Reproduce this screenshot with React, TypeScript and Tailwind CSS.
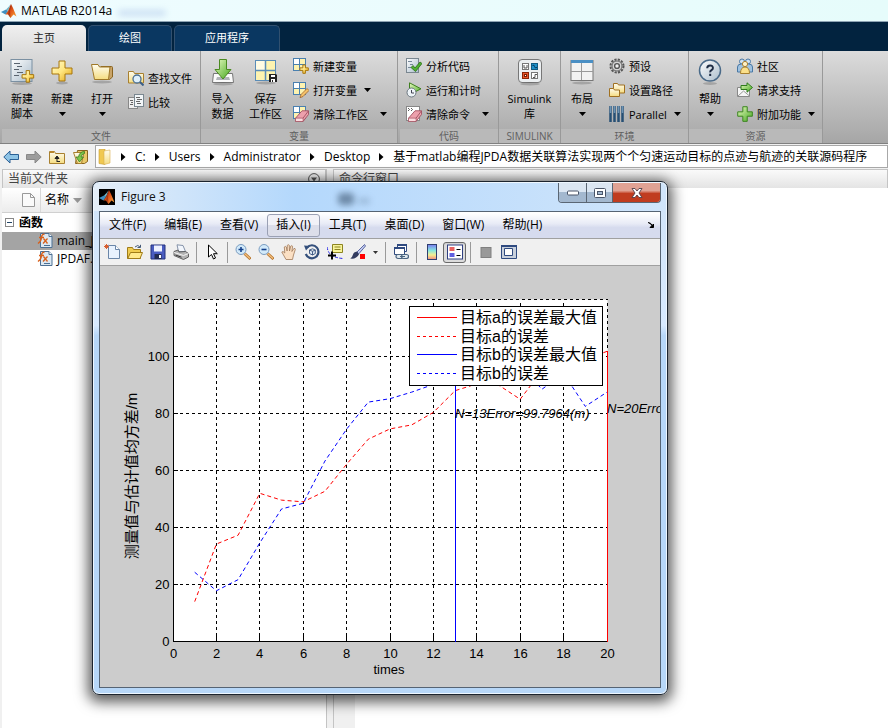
import React from "react";

const UI = "font-['Open_Sans','Noto_Sans_CJK_SC',sans-serif]";

type Kids = { children?: React.ReactNode };

/* ---------- icons ---------- */

function Ico({ children, w = 16, h = 16, box }: Kids & { w?: number; h?: number; box?: string }) {
  return (
    <svg width={w} height={h} viewBox={box ?? `0 0 ${w} ${h}`} className="shrink-0" aria-hidden="true">
      {children}
    </svg>
  );
}

function Defs() {
  return (
    <svg width="0" height="0" className="absolute" aria-hidden="true">
      <defs>
        <linearGradient id="gold" x1="0" y1="0" x2="1" y2="1">
          <stop offset="0" stopColor="#fffbd0" />
          <stop offset=".5" stopColor="#ffe680" />
          <stop offset="1" stopColor="#e0a010" />
        </linearGradient>
        <linearGradient id="folder" x1="0" y1="0" x2="0" y2="1">
          <stop offset="0" stopColor="#fffdf0" />
          <stop offset="1" stopColor="#f5dc80" />
        </linearGradient>
        <linearGradient id="green" x1="0" y1="0" x2="1" y2="1">
          <stop offset="0" stopColor="#e8fbc0" />
          <stop offset="1" stopColor="#45a820" />
        </linearGradient>
        <linearGradient id="steel" x1="0" y1="0" x2="1" y2="1">
          <stop offset="0" stopColor="#ffffff" />
          <stop offset="1" stopColor="#a9bccb" />
        </linearGradient>
        <linearGradient id="rainbow" x1="0" y1="0" x2="0" y2="1">
          <stop offset="0" stopColor="#7a7af0" />
          <stop offset=".4" stopColor="#86e8e0" />
          <stop offset=".7" stopColor="#f6ee90" />
          <stop offset="1" stopColor="#f08a80" />
        </linearGradient>
        <linearGradient id="flame" x1="0" y1="0" x2="1" y2="1">
          <stop offset="0" stopColor="#7c1a08" />
          <stop offset=".5" stopColor="#e0561a" />
          <stop offset="1" stopColor="#f8b040" />
        </linearGradient>
      </defs>
    </svg>
  );
}

const Logo = ({ dark }: { dark?: boolean }) => (
  <Ico>
    {dark && <rect width="16" height="16" fill="#000" />}
    <path d="M0 9 L5 6.500 L7 8 L4.500 11.500 Z" fill="#3f8fc0" />
    <path d="M5 6.500 L7.500 4 L9.500 1.500 L7 8 Z" fill="#6db3c8" />
    <path d="M4.500 11.500 L7 8 L10 1 L12 5 L15.500 13.500 L12.500 11.500 L9.500 15 L7 11.500 Z" fill="url(#flame)" />
    <path d="M10 1 L9 8 L9.500 15 L7 11 Z" fill="#8c2410" opacity=".6" />
  </Ico>
);

const Caret = () => (
  <svg width="7" height="4" viewBox="0 0 7 4" className="shrink-0" aria-hidden="true">
    <path d="M0 0H7L3.500 4Z" fill="#000" />
  </svg>
);

const Plus = ({ x = 0, y = 0, s = 1, fill = "url(#gold)", stroke = "#a8760c" }) => (
  <path
    transform={`translate(${x} ${y}) scale(${s})`}
    d="M8 1H14V8H21V14H14V21H8V14H1V8H8Z"
    fill={fill}
    stroke={stroke}
    strokeWidth={1 / s}
  />
);

const Shadow = ({ y, cx = 13, rx = 10 }: { y: number; cx?: number; rx?: number }) => (
  <ellipse cx={cx} cy={y} rx={rx} ry="1.500" fill="#000" opacity=".18" />
);

const NewScript = () => (
  <Ico w={26} h={28}>
    <rect x="2" y="1.500" width="21" height="22" fill="url(#steel)" stroke="#7b90a2" />
    <path d="M5 5.500h6M8 8.500h5M5 11.500h5M8 14.500h6M5 17.500h5" stroke="#5b6570" />
    <Plus x={12.500} y={12} s={0.58} />
    <Shadow y={25.500} />
  </Ico>
);
const NewPlus = () => (
  <Ico w={26} h={28}>
    <Plus x={2} y={2} />
    <Shadow y={25} rx={6} />
  </Ico>
);
const OpenBig = () => (
  <Ico w={26} h={28}>
    <path d="M12 8.500h10.500q1 0 1 1V19l-3 2.500h-8z" fill="#c9a468" stroke="#8a6420" />
    <path d="M2.500 6.500h6.500l1.500 2.500h10.500l-1.500 12.500H5.500q-1.500-8-3-15z" fill="url(#folder)" stroke="#a07828" />
    <Shadow y={24} />
  </Ico>
);
const ImportBig = () => (
  <Ico w={26} h={28}>
    <path d="M3.500 15.500h19l1 9h-21z" fill="#fafafa" stroke="#777" />
    <path d="M7 19h12l1 3H6z" fill="#b0b4b8" />
    <path d="M9.500 1.500h7v10h4.500l-8 9.500-8-9.500h4.500z" fill="url(#green)" stroke="#4a8a20" />
    <Shadow y={26} />
  </Ico>
);
const Disk = ({ x = 0, y = 0 }) => (
  <g transform={`translate(${x} ${y})`}>
    <path d="M0 0h7l1 1v7H0z" fill="#222" />
    <path d="M2 1h4v2H2zM2 5h4v3H2z" fill="#fff" />
    <path d="M3 6h1v2H3z" fill="#222" />
  </g>
);
const SaveWs = () => (
  <Ico w={26} h={28}>
    <rect x="2.500" y="2.500" width="20" height="20" fill="#fdf3b0" stroke="#5a8db8" />
    <path d="M3 3h9v9H3z" fill="#fffbe4" />
    <path d="M12.500 3v20M2.500 12.500h20" stroke="#5a8db8" strokeWidth="1.500" />
    <Disk x={16} y={16} />
    <Shadow y={25} />
  </Ico>
);
const Simulink = () => (
  <Ico w={26} h={28}>
    <rect x="1.500" y="1.500" width="23" height="23" rx="3.500" fill="#eceff1" stroke="#777" />
    <rect x="5.500" y="5.500" width="6" height="6" fill="#fff" stroke="#777" />
    <path d="M7 7v3h3V7" stroke="#555" fill="none" />
    <rect x="14.500" y="5.500" width="6" height="6" fill="#1f8fc8" stroke="#135a80" />
    <path d="M15.500 7.500q2-1 2 1t2.500 1" stroke="#083a5c" fill="none" />
    <rect x="5.500" y="14.500" width="6" height="6" fill="#e8542a" stroke="#8a2408" />
    <rect x="7.500" y="16.500" width="2" height="2" fill="#fff" stroke="#7a1c00" />
    <rect x="14.500" y="14.500" width="6" height="6" fill="#fff" stroke="#777" />
    <path d="M16 19.500h2v-3h2" stroke="#555" fill="none" />
    <Shadow y={26} />
  </Ico>
);
const LayoutBig = () => (
  <Ico w={26} h={28}>
    <rect x="2" y="2.500" width="22" height="20" fill="#f2f2f2" stroke="#777" />
    <path d="M2 2h22v3H2z" fill="#4a8fc4" />
    <path d="M12.500 5v17M2 13.500h22" stroke="#999" />
    <Shadow y={25} />
  </Ico>
);
const HelpBig = () => (
  <Ico w={26} h={28}>
    <circle cx="13" cy="12.500" r="10.500" fill="url(#steel)" stroke="#4a6a88" strokeWidth="1.500" />
    <path d="M10.200 10.300q0-2.800 2.900-2.800t2.800 2.500q0 1.400-1.400 2.200t-1.300 2.200M13.200 15.800v2.200" stroke="#1d2c44" strokeWidth="2" fill="none" />
    <Shadow y={25.500} rx={7} />
  </Ico>
);

const FindFiles = () => (
  <Ico>
    <path d="M.5 1.500h5l1 2h9v9.500H.5z" fill="url(#folder)" stroke="#a88030" />
    <circle cx="9" cy="9" r="4" fill="#dff0fb" stroke="#4a6f94" strokeWidth="1.300" />
    <path d="M12 12l3.500 3.500" stroke="#3b5f88" strokeWidth="2" />
  </Ico>
);
const Compare = () => (
  <Ico>
    <rect x=".5" y="3.500" width="9" height="11" fill="#eee" stroke="#888" />
    <rect x="6.500" y=".5" width="9" height="12" fill="#f2f6f8" stroke="#7a8790" />
    <path d="M8 3.500h4M9 5.500h5M8 7.500h4M9 9.500h4M2 6.500h3M3 8.500h2M2 10.500h3" stroke="#666" />
  </Ico>
);
const Grid4 = () => (
  <>
    <rect x=".5" y=".5" width="12" height="12" fill="#fdf3b0" stroke="#4a80b0" />
    <path d="M1 1h5.500v5.500H1z" fill="#fff" />
    <path d="M6.500 .5v12M.5 6.500h12" stroke="#4a80b0" />
  </>
);
const NewVar = () => (
  <Ico>
    <Grid4 />
    <Plus x={6.500} y={6.500} s={0.42} />
  </Ico>
);
const OpenVar = () => (
  <Ico>
    <Grid4 />
    <path d="M14 6.500l2 2-6 6-3 1.200 1-3.200z" fill="#f4c26a" stroke="#a0642a" strokeWidth=".8" />
  </Ico>
);
const Eraser = () => (
  <>
    <path d="M2.500 12.200L9 4.800h6.500v3.700l-5.500 7H2.500z" fill="#eda0ac" stroke="#a05060" strokeWidth=".9" />
    <path d="M2.500 12.200H10l5.500-7.400M10 12.200v3.300" stroke="#a05060" strokeWidth=".9" fill="none" />
    <path d="M2.900 12.600h6.700v2.500H2.900z" fill="#fbdce0" />
  </>
);
const ClearWs = () => (
  <Ico>
    <Grid4 />
    <Eraser />
  </Ico>
);
const Analyze = () => (
  <Ico>
    <rect x=".5" y=".5" width="12" height="14" fill="url(#steel)" stroke="#7a8790" />
    <path d="M2 3.500h4M4 6.500h3M2 9.500h3" stroke="#789" />
    <path d="M5 9.500l2-2 2 2.500 5-6 2 1.500-6.500 8z" fill="#4fb030" stroke="#2c6c18" strokeWidth=".8" />
  </Ico>
);
const RunTime = () => (
  <Ico>
    <path d="M3.500 .8l11.500 6-11.500 6z" fill="url(#green)" stroke="#3f7f20" />
    <circle cx="5.500" cy="10.500" r="4.500" fill="#eef4f8" stroke="#6c7780" />
    <path d="M5.500 8v3h2.500" stroke="#445" fill="none" />
  </Ico>
);
const ClearCmd = () => (
  <Ico>
    <rect x=".5" y=".5" width="13" height="14" fill="#fff" stroke="#888" />
    <path d="M2 2l1.500 1.500L2 5M5 2l1.500 1.500L5 5" stroke="#333" fill="none" strokeWidth=".8" />
    <Eraser />
  </Ico>
);
const Gear = () => (
  <Ico>
    <circle cx="8" cy="8" r="6.500" fill="none" stroke="#555" strokeWidth="2" strokeDasharray="2.200 1.200" />
    <circle cx="8" cy="8" r="5" fill="#d6d6d6" stroke="#666" />
    <circle cx="8" cy="8" r="2.400" fill="#eee" stroke="#555" strokeWidth="1.400" />
  </Ico>
);
const SetPath = () => (
  <Ico>
    <path d="M4.500 1.500h4l1 1.500h6v8h-11z" fill="url(#folder)" stroke="#a07020" />
    <path d="M.5 6.500h4l1 1.500h5v6.500H.5z" fill="url(#folder)" stroke="#a07020" />
  </Ico>
);
const ParallelIcon = () => (
  <Ico>
    <path d="M1.500 0v16M5.500 0v16M9.500 0v16M13.500 0v16" stroke="#264f74" strokeWidth="2.500" />
    <path d="M1.500 0v7M5.500 0v7M9.500 0v7M13.500 0v7" stroke="#6c93b4" strokeWidth="1.500" />
  </Ico>
);
const Community = () => (
  <Ico>
    <circle cx="5" cy="3.500" r="2.500" fill="#cfe2f2" stroke="#4a78a4" />
    <circle cx="11" cy="3.500" r="2.500" fill="#cfe2f2" stroke="#4a78a4" />
    <path d="M.5 14V9q0-3 4-3h7q4 0 4 3v5z" fill="#9fc2e0" stroke="#4a78a4" />
    <circle cx="8" cy="6" r="2.600" fill="#fff2c8" stroke="#a88030" />
    <path d="M3.500 15.500q0-6.500 4.500-6.500t4.500 6.500z" fill="#fbe08a" stroke="#a88030" />
  </Ico>
);
const Support = () => (
  <Ico>
    <path d="M.5 5.500h12v9H.5z" fill="#f6f6f6" stroke="#888" />
    <path d="M1 14l5.500-5 6 5" fill="none" stroke="#999" />
    <path d="M4 3.500h6V.8l5.500 4.700-5.500 4.700V7.500H4z" fill="url(#green)" stroke="#2f7a1c" />
  </Ico>
);
const AddOns = () => (
  <Ico>
    <Plus s={0.73} fill="url(#green)" stroke="#3c8420" />
  </Ico>
);

/* ---------- ribbon ---------- */

function Big({ icon, lines, caret, w }: { icon: React.ReactNode; lines: string[]; caret?: boolean; w: string }) {
  return (
    <button type="button" className={`flex flex-col items-center pt-[7px] ${w}`}>
      {icon}
      <span className="mt-[5px] flex flex-col items-center leading-[15px]">
        {lines.map((l) => (
          <span key={l} className="whitespace-nowrap">{l}</span>
        ))}
        {caret && (
          <span className="flex h-[15px] items-center">
            <Caret />
          </span>
        )}
      </span>
    </button>
  );
}

function Small({ icon, label, caret, wide }: { icon: React.ReactNode; label: string; caret?: boolean; wide?: boolean }) {
  return (
    <button type="button" className="flex h-6 items-center gap-1 whitespace-nowrap leading-[15px]">
      {icon}
      <span>{label}</span>
      {caret && (
        <span className={wide ? "pl-2" : "pl-[3px]"}>
          <Caret />
        </span>
      )}
    </button>
  );
}

const Col = ({ children }: Kids) => <div className="flex flex-col justify-center pl-1.5">{children}</div>;

function Section({ title, w, children }: Kids & { title: string; w: string }) {
  return (
    <section className={`flex shrink-0 flex-col border-r border-[#999] ${w}`}>
      <div className="flex h-[78px]">{children}</div>
      <h2 className="flex h-[14px] items-center justify-center bg-[#b9b9b9] text-[10px] text-[#606060]">{title}</h2>
    </section>
  );
}

function Ribbon() {
  return (
    <div className="flex border-b border-[#808080] bg-linear-to-b from-[#dcdcdc] to-[#a6a6a6] text-[11px] text-black">
      <Section title="文件" w="w-[201px] pl-0.5">
        <Big icon={<NewScript />} lines={["新建", "脚本"]} w="w-10" />
        <Big icon={<NewPlus />} lines={["新建"]} caret w="w-10" />
        <Big icon={<OpenBig />} lines={["打开"]} caret w="w-10" />
        <Col>
          <Small icon={<FindFiles />} label="查找文件" />
          <Small icon={<Compare />} label="比较" />
        </Col>
      </Section>
      <Section title="变量" w="w-[197px]">
        <Big icon={<ImportBig />} lines={["导入", "数据"]} w="w-[43px]" />
        <Big icon={<SaveWs />} lines={["保存", "工作区"]} w="w-[43px]" />
        <Col>
          <Small icon={<NewVar />} label="新建变量" />
          <Small icon={<OpenVar />} label="打开变量" caret />
          <Small icon={<ClearWs />} label="清除工作区" caret wide />
        </Col>
      </Section>
      <Section title="代码" w="w-[101px] pl-0.5">
        <Col>
          <Small icon={<Analyze />} label="分析代码" />
          <Small icon={<RunTime />} label="运行和计时" />
          <Small icon={<ClearCmd />} label="清除命令" caret wide />
        </Col>
      </Section>
      <Section title="SIMULINK" w="w-[62px]">
        <Big icon={<Simulink />} lines={["Simulink", "库"]} w="w-full" />
      </Section>
      <Section title="环境" w="w-[128px]">
        <Big icon={<LayoutBig />} lines={["布局"]} caret w="w-[42px]" />
        <Col>
          <Small icon={<Gear />} label="预设" />
          <Small icon={<SetPath />} label="设置路径" />
          <Small icon={<ParallelIcon />} label="Parallel" caret />
        </Col>
      </Section>
      <Section title="资源" w="w-[134px]">
        <Big icon={<HelpBig />} lines={["帮助"]} caret w="w-[42px]" />
        <Col>
          <Small icon={<Community />} label="社区" />
          <Small icon={<Support />} label="请求支持" />
          <Small icon={<AddOns />} label="附加功能" caret />
        </Col>
      </Section>
    </div>
  );
}

function Tab({ label, active, w }: { label: string; active?: boolean; w: string }) {
  return (
    <button
      type="button"
      className={`h-[26px] rounded-t-[5px] text-[11px] ${w} ${
        active
          ? "bg-linear-to-b from-[#f0f0f0] to-[#dcdcdc] text-[#222]"
          : "border-x border-t border-[#31506f] bg-[#0a3761] text-white"
      }`}
    >
      {label}
    </button>
  );
}

/* ---------- address bar ---------- */

const Sep = () => (
  <svg width="5" height="8" viewBox="0 0 5 8" className="shrink-0" aria-hidden="true">
    <path d="M0 0L4.500 4L0 8Z" fill="#000" />
  </svg>
);

function AddressBar() {
  return (
    <div className="flex h-[25px] items-center bg-[#f0f0f0]">
      <div className="flex w-[95px] shrink-0 items-center gap-[7px] pl-[3px]">
        <button type="button" aria-label="后退">
          <Ico><path d="M.8 8L7 2v3.500h8.500v5H7V14z" fill="#8ec4e6" stroke="#2a5f94" /></Ico>
        </button>
        <button type="button" aria-label="前进">
          <Ico><path d="M15.200 8L9 2v3.500H.5v5H9V14z" fill="#9c9c9c" stroke="#888" /></Ico>
        </button>
        <button type="button" aria-label="上一级">
          <Ico>
            <path d="M.5 2.500h5l1 2h9v10H.5z" fill="url(#folder)" stroke="#a88030" />
            <path d="M1 2h4v2H1z" fill="#b8862c" />
            <path d="M8 13V8M6 9.500L8 7l2 2.500zM8 12.500h3" stroke="#222" fill="#222" />
          </Ico>
        </button>
        <button type="button" aria-label="浏览">
          <Ico>
            <path d="M5.500 1.500h10v11l-3 2h-9z" fill="#e8c868" stroke="#8a6420" />
            <path d="M1.500 3.500h8l2 2-2 9h-4z" fill="url(#folder)" stroke="#a88030" />
            <path d="M12.500 2.500q-5 0-6 5.500H4l3.500 5 4-5H9q.5-3 3.500-3.500z" fill="#7cc84c" stroke="#3c7a20" strokeWidth=".8" />
          </Ico>
        </button>
      </div>
      <nav className="flex h-[23px] min-w-0 flex-1 items-center gap-[9px] overflow-hidden border border-[#a8a8a8] bg-white pl-[2px] text-[12px] whitespace-nowrap text-black">
        <Ico w={14}>
          <path d="M1 .5l6-.5v15.500l-6-1z" fill="#f0c850" stroke="#c89a30" strokeWidth=".6" />
          <path d="M6 2l6-1v13l-6 1.500z" fill="url(#folder)" stroke="#d8b050" strokeWidth=".6" />
        </Ico>
        <Sep />
        <a href="#c">C:</a>
        <Sep />
        <a href="#users">Users</a>
        <Sep />
        <a href="#admin">Administrator</a>
        <Sep />
        <a href="#desktop">Desktop</a>
        <Sep />
        <a href="#project">基于matlab编程JPDA数据关联算法实现两个个匀速运动目标的点迹与航迹的关联源码程序</a>
      </nav>
    </div>
  );
}

/* ---------- docked panels ---------- */

const PanelTitle = ({ children }: Kids) => (
  <header className="flex h-[19px] items-center justify-between border border-b-0 border-[#c4c4c4] bg-linear-to-b from-[#fafafa] to-[#e4e4e4] px-[5px] text-[12px] text-[#444]">
    {children}
  </header>
);

const MFile = () => (
  <Ico>
    <path d="M3.500 .5h8.500l3 3v11H3.500z" fill="#dce8f2" stroke="#4c7094" />
    <path d="M12 .5v3h3" fill="#fff" stroke="#4c7094" />
    <path d="M7.500 1.500Q5 .5 4.500 4.500T1 10.500M2 4.500h5" stroke="#d8601c" strokeWidth="1.500" fill="none" />
    <path d="M6.500 5.500l4 5M10.500 5.500l-4.500 5" stroke="#d8601c" strokeWidth="1.300" fill="none" />
    <path d="M7 12.500h6" stroke="#4c7094" />
  </Ico>
);

function Workspace() {
  return (
    <main className="flex flex-1 bg-[#f0f0f0] pl-0.5">
      <section className="flex w-[325px] shrink-0 flex-col border-r border-[#c4c4c4] bg-white">
        <PanelTitle>
          <h2>当前文件夹</h2>
          <button type="button" aria-label="面板操作">
            <Ico w={12} h={12}>
              <circle cx="6" cy="6" r="5.400" fill="#f4f4f4" stroke="#555" />
              <path d="M3 4.500h6L6 8.500z" fill="#555" />
            </Ico>
          </button>
        </PanelTitle>
        <div className="flex h-[25px] items-center border-b border-[#d0d0d0] bg-linear-to-b from-white to-[#ececec] text-[12px]">
          <span className="flex h-full w-[39px] items-center justify-end border-r border-[#d8d8d8] pr-[5px]">
            <Ico w={13} h={14}>
              <path d="M.5 .5h8l4 4v9H.5z" fill="#fafafa" stroke="#999" />
              <path d="M8.500 .5v4h4" fill="none" stroke="#999" />
            </Ico>
          </span>
          <span className="pl-1">名称</span>
          <svg width="9" height="5" viewBox="0 0 9 5" className="ml-1" aria-hidden="true"><path d="M0 0h9L4.500 5z" fill="#999" /></svg>
        </div>
        <ul className="text-[12px] text-black">
          <li className="flex h-[19px] items-center gap-[5px] pl-[3px] font-bold">
            <Ico w={9} h={9}>
              <rect x=".5" y=".5" width="8" height="8" fill="#fff" stroke="#888" />
              <path d="M2 4.500h5" stroke="#246" />
            </Ico>
            函数
          </li>
          <li className="flex h-[18px] items-center gap-1 bg-[#a4a4a4] pl-[35px]"><MFile />main_JPDAF.m</li>
          <li className="flex h-[18px] items-center gap-1 pl-[35px]"><MFile />JPDAF.m</li>
        </ul>
      </section>
      <section className="ml-1.5 flex min-w-0 flex-1 flex-col">
        <PanelTitle><h2>命令行窗口</h2></PanelTitle>
        <div className="flex flex-1 border-l border-[#c4c4c4]">
          <div className="w-[21px]" />
          <div className="flex-1 bg-white" />
        </div>
      </section>
    </main>
  );
}

/* ---------- figure window ---------- */

function TB({ label, children, pressed }: Kids & { label: string; pressed?: boolean }) {
  return (
    <button
      type="button"
      aria-label={label}
      className={`flex h-[21px] w-[23px] items-center justify-center rounded-[3px] ${pressed ? "border border-[#6a6a6a] bg-[#dcdcdc] inset-shadow-xs" : ""}`}
    >
      {children}
    </button>
  );
}

const Bar = () => (
  <span className="flex w-2 justify-center"><span className="h-[21px] w-px bg-[#9a9a9a]" /></span>
);

const Lens = ({ plus }: { plus?: boolean }) => (
  <Ico>
    <path d="M9.500 9.500l6 5.500" stroke="#b87830" strokeWidth="3" />
    <path d="M9.500 9.500l5.500 5" stroke="#f4c080" strokeWidth="1.200" />
    <circle cx="6" cy="5.500" r="5" fill="#d2eafa" stroke="#7a9cc0" />
    <path d={plus ? "M3.500 5.500h5M6 3v5" : "M3.500 5.500h5"} stroke="#14418c" strokeWidth="1.600" />
  </Ico>
);

function FigureToolbar() {
  return (
    <div className="flex h-[27px] items-center border-b border-[#a0a0a0] bg-[#f0f0f0]">
      <TB label="新建图形">
        <Ico>
          <path d="M4.500 1.500h7l4 4v9h-11z" fill="#e8f2fe" stroke="#6a86a8" />
          <path d="M11.500 1.500v4h4" fill="#fff" stroke="#6a86a8" />
          <path d="M2.500 0v5M0 2.500h5M.8 .8l3.400 3.400M4.200 .8L.8 4.200" stroke="#d86030" />
        </Ico>
      </TB>
      <TB label="打开文件">
        <Ico>
          <path d="M.5 3.500h5l1 2h7v9H.5z" fill="#f0cc50" stroke="#a07c18" />
          <path d="M3.500 8.500h12l-2.500 6H.8z" fill="#ffe98c" stroke="#a07c18" />
          <path d="M8 3q3-3 5 0M13.500 .8V3.500h-3" stroke="#445a78" fill="none" />
        </Ico>
      </TB>
      <TB label="保存图形">
        <Ico>
          <path d="M1 1h14v14H1z" fill="#4a5cc0" stroke="#22307c" />
          <path d="M4 1.500h8v6H4z" fill="#eef2ff" />
          <path d="M4.500 10h7v5h-7z" fill="#222a50" />
          <path d="M9 11h2v3H9z" fill="#fff" />
        </Ico>
      </TB>
      <TB label="打印图形">
        <Ico>
          <path d="M4 .8l6 .7 2.500 6H5.500z" fill="#f2f6fc" stroke="#7888a0" strokeWidth=".9" />
          <path d="M1 7.500l4-1.500 1 2 6.500-.5 3 2v3.500l-5 2.500L1 11.500z" fill="#b4b4b4" stroke="#555" strokeWidth=".9" />
          <path d="M1 8.500l9.500 3 5-2" stroke="#f4f4f4" fill="none" />
          <path d="M2.500 11l6 2.200" stroke="#333" />
        </Ico>
      </TB>
      <Bar />
      <TB label="编辑绘图">
        <Ico><path d="M4.500 1v12l3-2.500 2 4.500 2-1-2-4.300h3.800z" fill="#fff" stroke="#000" /></Ico>
      </TB>
      <Bar />
      <TB label="放大"><Lens plus /></TB>
      <TB label="缩小"><Lens /></TB>
      <TB label="平移">
        <Ico>
          <path
            d="M5 15.500L2.500 11 .8 8q1-1.500 3 1L3.300 3q1-1.300 2 0l.8 4 .2-5.700q1-1.200 2 0L8.500 7l1.300-5q1.200-.9 1.800.3L10.900 7.500l2-3q1.500-.4 1.400 1L12.500 11l-1 4.500z"
            fill="#fbe0c4" stroke="#a07858" strokeWidth=".8"
          />
        </Ico>
      </TB>
      <TB label="三维旋转">
        <Ico>
          <path d="M3 3.500A6.500 6.500 0 1 1 1.800 10" fill="none" stroke="#34507c" strokeWidth="2.200" />
          <path d="M0 1.500l6 .5-4 4.500z" fill="#34507c" />
          <path d="M5.500 6l3-1.200 2.800 1.200v3.500l-2.800 1.500-3-1.500zM5.500 6l3 1.300L11.300 6M8.500 7.300V11" fill="#dde8f4" stroke="#34507c" strokeWidth=".9" />
        </Ico>
      </TB>
      <TB label="数据游标">
        <Ico>
          <path d="M5.500 .5h10v8h-10z" fill="#f8f49a" stroke="#8c8420" />
          <path d="M7.500 3h6M7.500 5.500h6" stroke="#8c8420" />
          <path d="M0 3q1 6 5 8.500t11 3" stroke="#2424e8" fill="none" strokeDasharray="3 1.500" />
          <path d="M5 7.500v8M1 11.500h8" stroke="#000" strokeWidth="2" />
        </Ico>
      </TB>
      <TB label="刷亮">
        <Ico>
          <path d="M14.500 .5L7 8l1.800 1.800L15.500 2z" fill="#c4ccf0" stroke="#3c4c90" strokeWidth=".8" />
          <path d="M7 7.500q-3.500 .5-4 3T.3 14.500q5.700 1 8.700-4z" fill="#333c60" />
          <path d="M10 10h5v5h-5z" fill="#f00" />
        </Ico>
      </TB>
      <button type="button" aria-label="刷亮选项" className="flex w-3 justify-center">
        <svg width="5" height="3" viewBox="0 0 5 3" aria-hidden="true"><path d="M0 0h5L2.500 3z" fill="#333" /></svg>
      </button>
      <Bar />
      <TB label="链接绘图">
        <Ico>
          <path d="M4.500 .5h9v7h-9z" fill="#fff" stroke="#2f4a80" />
          <path d="M1.500 3.500h10v7h-10z" fill="#fff" stroke="#2f4a80" />
          <path d="M1 3h11v2H1zM4 0h10v2H4z" fill="#2f4a80" />
          <rect x="3" y="10.500" width="7" height="4" rx="2" fill="#dfe8ee" stroke="#4a6480" strokeWidth="1.200" />
          <rect x="8.500" y="10.500" width="7" height="4" rx="2" fill="#dfe8ee" stroke="#4a6480" strokeWidth="1.200" />
          <path d="M7 12.500h5" stroke="#4a6480" />
        </Ico>
      </TB>
      <Bar />
      <TB label="插入颜色栏">
        <Ico><rect x="3.500" y=".5" width="9" height="15" fill="url(#rainbow)" stroke="#2f3f70" /></Ico>
      </TB>
      <TB label="插入图例" pressed>
        <Ico>
          <rect x=".5" y="1" width="15" height="14" fill="#fff" stroke="#2f3f80" />
          <path d="M2.500 3h5v4h-5z" fill="#e86060" />
          <path d="M2.500 9h5v4h-5z" fill="#6060e0" />
          <path d="M9.500 5.500h4M9.500 11.500h4" stroke="#000" />
        </Ico>
      </TB>
      <Bar />
      <TB label="隐藏绘图工具">
        <Ico><rect x="3" y="3.500" width="10" height="10" fill="#999" stroke="#808080" /></Ico>
      </TB>
      <TB label="显示绘图工具">
        <Ico>
          <path d="M.5 1.500h15v13H.5z" fill="#c8d0dc" stroke="#2f4a80" />
          <path d="M0 1h16v2H0z" fill="#2f4a80" />
          <path d="M3.500 4.500h8v7h-8z" fill="#fff" stroke="#2f4a80" />
        </Ico>
      </TB>
    </div>
  );
}

/* Plot area: x runs 0..20, y runs 0..120. */
const X0 = 73;
const Y0 = 375.5;
const px = (x: number) => X0 + x * 21.7;
const gx = (x: number) => Math.floor(px(x) + 0.01) + 0.5;
const py = (y: number) => Y0 - y * 2.85;

const errorA = [14, 34.2, 37.3, 52, 49.6, 49, 52.7, 62.2, 71, 74.6, 76, 80.4, 88, 90.4, 90, 85, 95, 101, 99, 101.8];
const errorB = [24.3, 17.8, 21.7, 34.6, 46.5, 48.5, 63.3, 74.5, 84, 85.2, 87.5, 90.2, 92, 95, 96, 97, 88.5, 94, 82.5, 87.5];
const toPoints = (d: number[]) => d.map((v, i) => `${px(i + 1)},${py(v)}`).join(" ");

const ticksX = [0, 2, 4, 6, 8, 10, 12, 14, 16, 18, 20];
const ticksY = [0, 20, 40, 60, 80, 100, 120];
const legend = [
  { label: "目标a的误差最大值", color: "#f00", dashed: false },
  { label: "目标a的误差", color: "#f00", dashed: true },
  { label: "目标b的误差最大值", color: "#00f", dashed: false },
  { label: "目标b的误差", color: "#00f", dashed: true },
];

function Plot() {
  return (
    <svg className="block h-[421px] w-full bg-[#ccc] font-['Liberation_Sans','Noto_Sans_CJK_SC',sans-serif]" role="img" aria-label="误差曲线">
      <rect x={gx(0)} y={py(120)} width="434" height="342" fill="#fff" />
      <g stroke="#000" shapeRendering="crispEdges">
        {ticksX.slice(1).map((t) => (
          <path key={t} d={`M${gx(t)} ${Y0}V${py(120)}`} strokeDasharray="3 3" />
        ))}
        {ticksY.slice(1).map((t) => (
          <path key={t} d={`M${gx(0)} ${py(t)}H${gx(20)}`} strokeDasharray="3 3" />
        ))}
        {ticksX.map((t) => (
          <path key={t} d={`M${gx(t)} ${Y0}v-7`} />
        ))}
        {ticksY.map((t) => (
          <path key={t} d={`M${gx(0)} ${py(t)}h4`} />
        ))}
        <path d={`M${gx(0)} ${py(120)}V${Y0}H${gx(20)}`} fill="none" />
      </g>
      <g fill="none" strokeDasharray="4 3">
        <polyline points={toPoints(errorA)} stroke="#f00" />
        <polyline points={toPoints(errorB)} stroke="#00f" />
      </g>
      <path d={`M${gx(13)} ${Y0}V${py(99.8)}`} stroke="#00f" shapeRendering="crispEdges" />
      <path d={`M${gx(20)} ${Y0}V${py(101.8)}`} stroke="#f00" shapeRendering="crispEdges" />

      <g fontSize="13" fill="#000">
        {ticksY.map((t) => (
          <text key={t} x={gx(0) - 4} y={py(t) + 4} textAnchor="end">{t}</text>
        ))}
        {ticksX.map((t) => (
          <text key={t} x={gx(t)} y={Y0 + 16} textAnchor="middle">{t}</text>
        ))}
        <text x={px(10) - 1} y={Y0 + 32} textAnchor="middle">times</text>
        <text x={px(13)} y={py(80) + 4} fontStyle="italic">N=13Error=99.7964(m)</text>
        <text x={px(20)} y={py(80) - 1} fontStyle="italic">N=20Erro</text>
      </g>
      <text transform="translate(37 210) rotate(-90)" textAnchor="middle" fontSize="15">测量值与估计值均方差/m</text>

      <rect x="309.5" y="40.500" width="193" height="79" fill="#fff" stroke="#000" shapeRendering="crispEdges" />
      {legend.map((l, i) => (
        <g key={l.label}>
          <path
            d={`M317 ${51.5 + i * 18.6}h40`}
            stroke={l.color}
            strokeDasharray={l.dashed ? "3 3" : undefined}
            shapeRendering="crispEdges"
          />
          <text x="360" y={57 + i * 18.6} fontSize="16">{l.label}</text>
        </g>
      ))}
    </svg>
  );
}

const menus = ["文件(F)", "编辑(E)", "查看(V)", "插入(I)", "工具(T)", "桌面(D)", "窗口(W)", "帮助(H)"];

function FigureWindow() {
  return (
    <div
      role="dialog"
      aria-label="Figure 3"
      className="absolute top-[181px] left-[92px] flex w-[576px] flex-col rounded-[7px] border border-[#1c242e] bg-linear-to-b from-[#cfe3f8] via-[#d8eaff] via-28% to-[#b7d7f8] to-30% pb-1.5 shadow-[0_3px_14px_4px_rgba(0,0,0,0.65)] inset-ring inset-ring-[#eef7ff]"
    >
      <div className="relative mx-px mt-px flex h-7 rounded-t-[6px] bg-linear-to-r from-[#e4eef8] via-[#b4d8fc] via-35% to-[#d0e5fb] px-[5px]">
        <div className="absolute top-[10px] left-[244px] h-3 w-4 rounded bg-[#3c5570]/60 blur-[3px]" />
        <div className="absolute top-[15px] left-[264px] h-1.5 w-3 rounded bg-[#3c5570]/25 blur-[3px]" />
        <div className="mt-[6px] flex h-4 items-center gap-1.5 text-[12px] text-[#111]">
          <Logo dark />
          <h1>Figure 3</h1>
        </div>
        <div className="ml-auto flex h-5 overflow-hidden rounded-b-[4px] border border-t-0 border-[#5a6674]">
          <button type="button" aria-label="最小化" className="flex w-[28px] items-center justify-center border-r border-[#5a6674] bg-linear-to-b from-[#dbe6f2] from-45% to-[#a3b8cf] to-50%">
            <Ico w={12} h={6}><rect x=".5" y="1" width="11" height="4" rx="1" fill="#fff" stroke="#4a5568" /></Ico>
          </button>
          <button type="button" aria-label="最大化" className="flex w-[26px] items-center justify-center border-r border-[#5a6674] bg-linear-to-b from-[#dbe6f2] from-45% to-[#a3b8cf] to-50%">
            <Ico w={12} h={10}>
              <rect x=".5" y=".5" width="11" height="9" rx="1" fill="#fff" stroke="#4a5568" />
              <rect x="3.500" y="3.500" width="5" height="3" fill="#a3b8cf" stroke="#4a5568" />
            </Ico>
          </button>
          <button type="button" aria-label="关闭" className="flex w-[47px] items-center justify-center bg-linear-to-b from-[#e0a294] from-40% to-[#c03c20] to-55%">
            <Ico w={12} h={10}>
              <path d="M1 .5h3l2 2.500 2-2.500h3L8 5l3 4.500H8L6 7 4 9.500H1L4 5z" fill="#fff" stroke="#50404a" strokeWidth=".9" />
            </Ico>
          </button>
        </div>
      </div>
      <div className="mx-1.5 border border-[#566474]">
        <div className="flex h-[27px] items-center border-b border-[#a0a0a0] bg-linear-to-b from-white from-5% via-[#e8ebf6] via-45% to-[#d6dbee] to-60% text-[12px] text-black">
          {menus.map((m) => (
            <button
              type="button"
              key={m}
              className={`h-[23px] rounded-[3px] border px-2 whitespace-nowrap ${
                m === "插入(I)" ? "border-[#9aa0b4] bg-linear-to-b from-[#f2f2f8] from-45% to-[#dcdeea] to-50%" : "border-transparent"
              }`}
            >
              {m}
            </button>
          ))}
          <button type="button" aria-label="停靠" className="mr-[5px] ml-auto">
            <Ico w={8} h={8}><path d="M1 1.500q3 0 4.500 3.500M6.500 3v3.500H3z" stroke="#000" fill="#000" strokeWidth="1" /></Ico>
          </button>
        </div>
        <FigureToolbar />
        <Plot />
      </div>
    </div>
  );
}

export default function App() {
  return (
    <div className={`relative flex min-h-screen flex-col overflow-hidden bg-white ${UI}`}>
      <Defs />
      <div className="relative flex h-[22px] items-center gap-1 border-b border-[#8ea4b4] bg-linear-to-r from-[#effcff] to-[#e6fcfb] pl-px text-[12px] text-black">
        <div className="absolute top-[10px] left-[118px] h-1.5 w-12 rounded bg-[#7fa0dc]/30 blur-[3px]" />
        <Logo />
        <span className="relative">MATLAB R2014a</span>
      </div>
      <div className="flex h-[29px] items-end gap-0.5 bg-[#02233f] pl-0.5">
        <Tab label="主页" active w="w-[84px]" />
        <Tab label="绘图" w="w-[84px]" />
        <Tab label="应用程序" w="w-[106px]" />
      </div>
      <Ribbon />
      <AddressBar />
      <Workspace />
      <FigureWindow />
    </div>
  );
}
